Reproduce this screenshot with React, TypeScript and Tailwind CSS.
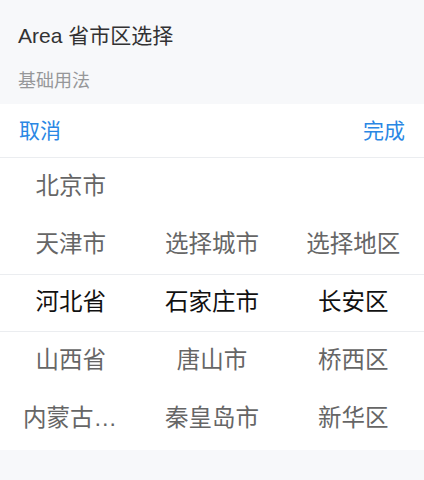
import React from "react";

const font = "font-['Liberation_Sans','Noto_Sans_CJK_SC',sans-serif]";

const columns: { items: string[]; offset: number }[] = [
  { items: ["北京市", "天津市", "河北省", "山西省", "内蒙古自治区"], offset: 0 },
  { items: ["选择城市", "石家庄市", "唐山市", "秦皇岛市"], offset: 1 },
  { items: ["选择地区", "长安区", "桥西区", "新华区"], offset: 1 },
];

const SELECTED_ROW = 2;

const App: React.FC = () => {
  return (
    <div className={`min-h-screen bg-[#f7f8fa] ${font}`}>
      <h2 className="px-[18px] pt-[23px] text-[21px] leading-[26px] text-[#323233]">Area 省市区选择</h2>
      <p className="px-[18px] pt-[20px] pb-[11px] text-[18px] leading-[24px] text-[#969799]">基础用法</p>

      <div className="bg-white">
        <div className="flex h-[54px] items-center justify-between border-b border-[#ebedf0] px-[19px] text-[21px] text-[#2a87e4]">
          <button className="cursor-pointer">取消</button>
          <button className="cursor-pointer">完成</button>
        </div>

        <div className="relative grid grid-cols-3 pb-[2px]">
          {columns.map((col, ci) => (
            <div key={ci} className="flex flex-col">
              {Array.from({ length: col.offset }).map((_, i) => (
                <div key={"e" + i} className="h-[58px]" />
              ))}
              {col.items.map((item, i) => {
                const row = i + col.offset;
                return (
                  <div
                    key={item}
                    className={`flex h-[58px] items-center justify-center px-[23px] text-[23.5px] ${
                      row === SELECTED_ROW ? "text-[#111]" : "text-[#666]"
                    }`}
                  >
                    <span className="block truncate">{item}</span>
                  </div>
                );
              })}
            </div>
          ))}
          <div className="pointer-events-none absolute inset-x-0 top-[116px] h-[58px] border-y border-[#ebedf0]" />
        </div>
      </div>
    </div>
  );
};

export default App;
